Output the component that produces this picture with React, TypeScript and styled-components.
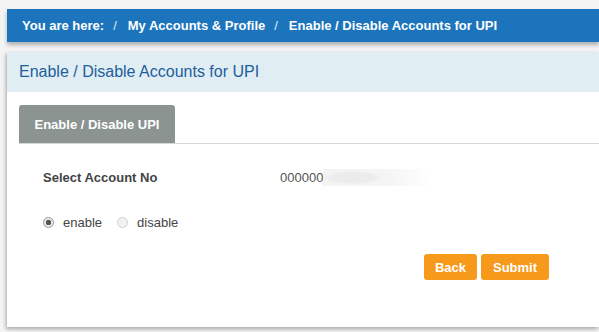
import React, { useState } from 'react';
import styled, { createGlobalStyle } from 'styled-components';

const GlobalStyle = createGlobalStyle`
  html, body {
    margin: 0;
    padding: 0;
    background: #f4f4f4;
    font-family: "Liberation Sans", Arial, sans-serif;
    overflow: hidden;
  }
`

const Page = styled.div`
  width: 599px;
  height: 332px;
  padding: 9px 0 0 7px;
  box-sizing: border-box;
  display: flex;
  flex-direction: column;
  gap: 10px;
`

const Breadcrumb = styled.div`
  height: 33px;
  background: #1b74bc;
  box-shadow: 0 3px 4px rgba(0, 0, 0, 0.28);
  display: flex;
  align-items: center;
  padding-left: 15px;
  color: #fff;
  font-size: 13px;
  font-weight: bold;
  white-space: nowrap;
`

const Crumb = styled.span``

const Sep = styled.span`
  margin: 0 11px 0 9px;
  font-weight: normal;
  opacity: 0.85;
`

const Panel = styled.div`
  background: #fff;
  height: 275px;
  box-shadow: -1px 2px 4px rgba(0, 0, 0, 0.32);
  display: flex;
  flex-direction: column;
`

const PanelHeader = styled.div`
  height: 40px;
  background: #e0edf3;
  display: flex;
  align-items: center;
  padding-left: 12px;
  color: #1e5e9c;
  font-size: 16px;
`

const Body = styled.div`
  padding: 13px 0 0 12px;
`

const TabBar = styled.div`
  display: flex;
  border-bottom: 1px solid #d6d6d6;
`

const Tab = styled.div<{ active?: boolean }>`
  width: 156px;
  height: 38px;
  display: flex;
  align-items: center;
  justify-content: center;
  background: ${props => props.active ? '#8b9491' : 'transparent'};
  border-radius: 3px 3px 0 0;
  color: #fff;
  font-size: 13px;
  font-weight: bold;
`

const Form = styled.div`
  padding: 24px 50px 0 24px;
  display: flex;
  flex-direction: column;
`

const FieldRow = styled.div`
  display: flex;
  align-items: center;
  height: 18px;
`

const Label = styled.span`
  width: 237px;
  font-size: 13px;
  font-weight: bold;
  color: #444;
`

const Value = styled.span`
  display: flex;
  align-items: center;
  font-size: 13px;
  color: #555;
`

const Masked = styled.span`
  display: inline-block;
  width: 110px;
  height: 17px;
  background: radial-gradient(ellipse 30px 7px at 30px 50%, #ececec 70%, rgba(236,236,236,0) 100%),
    linear-gradient(90deg, #f3f3f3 0%, #f5f5f5 60%, rgba(255,255,255,0) 100%);
`

const RadioRow = styled.div`
  display: flex;
  align-items: center;
  gap: 15px;
  margin-top: 29px;
  font-size: 13px;
  color: #444;
`

const RadioLabel = styled.label`
  display: flex;
  align-items: center;
  gap: 9px;
`

const RadioDot = styled.span<{ checked?: boolean }>`
  width: 11px;
  height: 11px;
  border-radius: 50%;
  box-sizing: border-box;
  border: 1px solid ${props => props.checked ? '#9a9a9a' : '#d0d0d0'};
  background: ${props => props.checked ? 'radial-gradient(circle, #555 0 2.5px, #e8e8e8 3px)' : '#f2f2f2'};
`

const Actions = styled.div`
  display: flex;
  justify-content: flex-end;
  gap: 4px;
  margin-top: 24px;
`

const Button = styled.button<{ w: number }>`
  width: ${props => props.w}px;
  height: 26px;
  background: #f7991b;
  border: none;
  border-radius: 3px;
  color: #fff;
  font-family: "Liberation Sans", Arial, sans-serif;
  font-size: 13px;
  font-weight: bold;
  padding: 0;
`

export default function App() {
  const [mode, setMode] = useState<'enable' | 'disable'>('enable');

  return (
    <Page>
      <GlobalStyle />
      <Breadcrumb>
        <Crumb>You are here:</Crumb>
        <Sep>/</Sep>
        <Crumb>My Accounts &amp; Profile</Crumb>
        <Sep>/</Sep>
        <Crumb>Enable / Disable Accounts for UPI</Crumb>
      </Breadcrumb>
      <Panel>
        <PanelHeader>Enable / Disable Accounts for UPI</PanelHeader>
        <Body>
          <TabBar>
            <Tab active>Enable / Disable UPI</Tab>
          </TabBar>
          <Form>
            <FieldRow>
              <Label>Select Account No</Label>
              <Value>000000<Masked /></Value>
            </FieldRow>
            <RadioRow>
              <RadioLabel onClick={() => setMode('enable')}>
                <RadioDot checked={mode === 'enable'} />enable
              </RadioLabel>
              <RadioLabel onClick={() => setMode('disable')}>
                <RadioDot checked={mode === 'disable'} />disable
              </RadioLabel>
            </RadioRow>
            <Actions>
              <Button w={53}>Back</Button>
              <Button w={68}>Submit</Button>
            </Actions>
          </Form>
        </Body>
      </Panel>
    </Page>
  );
}
